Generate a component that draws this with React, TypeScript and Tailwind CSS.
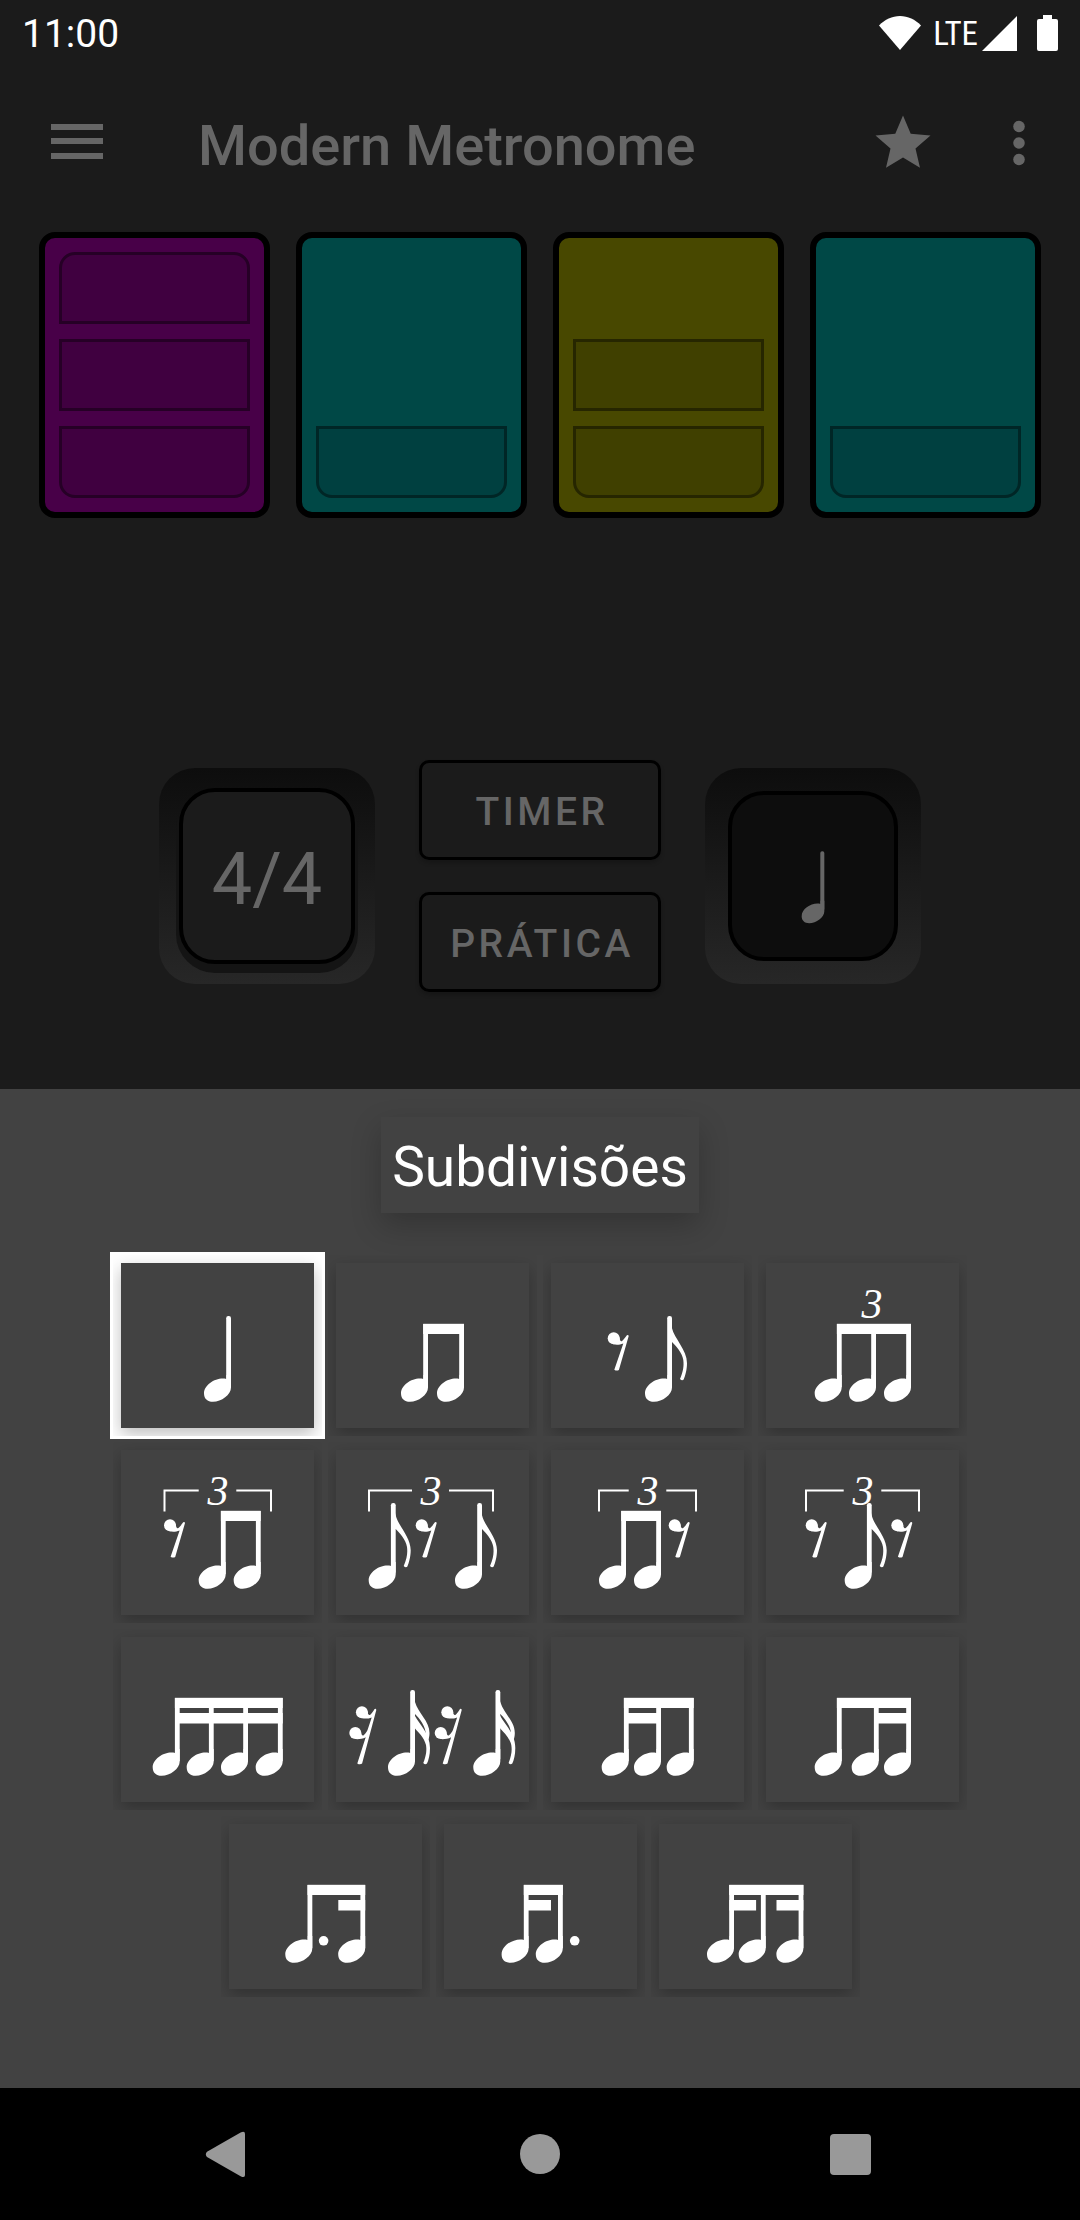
import React, { useState } from "react";

/* ---------- Music notation, drawn in a 193 x 165 cell ---------- */

const STEM = 4.8;

function Head({ x }: { x: number }) {
  return (
    <path
      transform={`translate(${x} 0)`}
      d="M-4.6 116C-6 115.5-7 115.4-8.2 115.4C-17 115.4-27 122.2-27 130.4C-27 135.6-23.6 138.7-18 138.7C-9.6 138.7 0 131.6 0 124.4L0 112L-4.6 112Z"
    />
  );
}

function Stem({ x, top }: { x: number; top: number }) {
  return <rect x={x - STEM} y={top} width={STEM} height={124 - top} rx={top < 60 ? 2.2 : 0} />;
}

function Quarter({ x }: { x: number }) {
  return (
    <g>
      <Head x={x} />
      <Stem x={x} top={53} />
    </g>
  );
}

function Eighth({ x }: { x: number }) {
  return (
    <g>
      <Quarter x={x} />
      <path
        transform={`translate(${x} 0)`}
        d="M-1 62L0 65.3C2 75 15 87 15 100.3C15 107 13.2 113 11.7 116.6Q10 118.2 8 116C11.4 108 12 103 11.3 97C10.2 89.5 3.5 82.5 0 79L-1 79Z"
      />
    </g>
  );
}

function Sixteenth({ x }: { x: number }) {
  return (
    <g>
      <Quarter x={x} />
      <path
        transform={`translate(${x} 0)`}
        d="M-1 62L0 65C3 76 14.5 84 14.5 96C14.5 99 14 101 13.3 102.8L10.6 98C11.6 90 4 81 0 77L-1 77Z"
      />
      <path
        transform={`translate(${x} 0)`}
        d="M-1 78L0 79C4 87 15 96 15 111C15 118 13.6 123 12 126.6Q10 128.2 8.3 126C11.4 118 11.8 113 11 108C9 100 3 95 0 91.5L-1 91Z"
      />
    </g>
  );
}

function Beamed({ xs, inner = [] }: { xs: number[]; inner?: [number, number][] }) {
  const left = xs[0] - STEM;
  return (
    <g>
      {xs.map((x) => (
        <g key={x}>
          <Head x={x} />
          <Stem x={x} top={61} />
        </g>
      ))}
      <rect x={left} y={60.8} width={xs[xs.length - 1] - left} height={10.2} />
      {inner.map(([a, b]) => (
        <rect key={a} x={a} y={76} width={b - a} height={10.5} />
      ))}
    </g>
  );
}

function EighthRest({ x }: { x: number }) {
  return (
    <g transform={`translate(${x} 69.3)`}>
      <circle cx="6" cy="6" r="6" />
      <path d="M11.6 4.5C12.2 8.6 13.2 9.4 14.4 8.6C16 7.4 17.8 5 19.2 3Q20.6 2 21 3.8L11.2 37.6Q9 39 6.6 37.4L15.6 11.2C12 12.7 8.4 12.8 5.5 12Z" />
    </g>
  );
}

function SixteenthRest({ x }: { x: number }) {
  return (
    <g transform={`translate(${x} 69)`}>
      <circle cx="12.6" cy="6.2" r="6" />
      <circle cx="6" cy="27" r="6" />
      <path d="M18 4.8C18.6 8.8 19.8 9.6 21 8.7C22.6 7.4 24.2 5 25.3 3Q26.8 2.2 27 4L12.8 57.6Q10.5 59.2 8 57.4L16.4 31.2C13 33 8.8 33.4 5.5 33L11.5 25.6C12.2 29.6 13.4 30.2 14.6 29C16.4 27.4 17.8 25.4 18.4 23.6L22.4 11.4C19 12.8 15.4 12.9 12.3 12.1Z" />
    </g>
  );
}

function Three({ x }: { x: number }) {
  return (
    <text x={x} y={55} textAnchor="middle" className="font-['Liberation_Serif',serif] text-[42px] italic">
      3
    </text>
  );
}

function Bracket({ x1, x2, x3, x4 }: { x1: number; x2: number; x3: number; x4: number }) {
  return (
    <path
      d={`M${x1 + 1} 61.5V40.5H${x2}M${x3} 40.5H${x4 - 1}V61.5`}
      fill="none"
      stroke="currentColor"
      strokeWidth="2"
    />
  );
}

type Pattern = { name: string; art: React.ReactNode };

const patterns: Pattern[] = [
  { name: "Semínima", art: <Quarter x={110} /> },
  { name: "Duas colcheias", art: <Beamed xs={[92, 128]} /> },
  {
    name: "Pausa e colcheia",
    art: (
      <>
        <EighthRest x={56.7} />
        <Eighth x={121} />
      </>
    ),
  },
  {
    name: "Tercina",
    art: (
      <>
        <Three x={106} />
        <Beamed xs={[75.7, 110, 145]} />
      </>
    ),
  },
  {
    name: "Tercina, pausa no início",
    art: (
      <>
        <Bracket x1={42.5} x2={77.7} x3={115.3} x4={151} />
        <Three x={97} />
        <EighthRest x={43} />
        <Beamed xs={[104.7, 139.7]} />
      </>
    ),
  },
  {
    name: "Tercina, pausa no meio",
    art: (
      <>
        <Bracket x1={32} x2={76} x3={113} x4={158} />
        <Three x={95} />
        <Eighth x={59.7} />
        <EighthRest x={79.7} />
        <Eighth x={146} />
      </>
    ),
  },
  {
    name: "Tercina, pausa no fim",
    art: (
      <>
        <Bracket x1={47} x2={77.7} x3={115.3} x4={146} />
        <Three x={97} />
        <Beamed xs={[75, 110]} />
        <EighthRest x={117.7} />
      </>
    ),
  },
  {
    name: "Tercina, nota no meio",
    art: (
      <>
        <Bracket x1={39} x2={77.7} x3={115.3} x4={154} />
        <Three x={97} />
        <EighthRest x={39.7} />
        <Eighth x={105.7} />
        <EighthRest x={125.3} />
      </>
    ),
  },
  { name: "Quatro semicolcheias", art: <Beamed xs={[58.7, 92.7, 127, 161.7]} inner={[[54, 161.7]]} /> },
  {
    name: "Pausas e semicolcheias",
    art: (
      <>
        <SixteenthRest x={13.3} />
        <Sixteenth x={79} />
        <SixteenthRest x={98.7} />
        <Sixteenth x={164.3} />
      </>
    ),
  },
  { name: "Duas semicolcheias e colcheia", art: <Beamed xs={[77.7, 110, 142.7]} inner={[[73, 110]]} /> },
  { name: "Colcheia e duas semicolcheias", art: <Beamed xs={[75.7, 112.7, 145]} inner={[[108, 145]]} /> },
  {
    name: "Colcheia pontuada e semicolcheia",
    art: (
      <>
        <Beamed xs={[83.3, 136.2]} inner={[[109.3, 136.2]]} />
        <circle cx="94.6" cy="116.8" r="4.8" />
      </>
    ),
  },
  {
    name: "Semicolcheia e colcheia pontuada",
    art: (
      <>
        <Beamed xs={[84.6, 118.8]} inner={[[80, 107]]} />
        <circle cx="130.7" cy="116.8" r="4.8" />
      </>
    ),
  },
  {
    name: "Semicolcheia, colcheia, semicolcheia",
    art: <Beamed xs={[75, 106.7, 144.4]} inner={[[70.3, 97.1], [117.5, 144.4]]} />,
  },
];

/* ---------- Beat cards ---------- */

const tones = {
  magenta: { card: "bg-[#480048]", bar: "bg-[#400040] border-[#260026]" },
  teal: { card: "bg-[#004846]", bar: "bg-[#004040] border-[#002626]" },
  olive: { card: "bg-[#484800]", bar: "bg-[#404000] border-[#262600]" },
};

const beats: { tone: keyof typeof tones; level: number }[] = [
  { tone: "magenta", level: 3 },
  { tone: "teal", level: 1 },
  { tone: "olive", level: 2 },
  { tone: "teal", level: 1 },
];

function Beat({ tone, level, index }: { tone: keyof typeof tones; level: number; index: number }) {
  const bars = Array.from({ length: level }, (_, i) => level - i);
  return (
    <button
      aria-label={`Tempo ${index}`}
      className={`flex h-[286px] flex-col justify-end gap-[15px] rounded-2xl border-6 border-black p-[14px] ${tones[tone].card}`}
    >
      {bars.map((n) => (
        <span
          key={n}
          className={`block h-[72px] w-full border-3 ${tones[tone].bar} ${n === 3 ? "rounded-t-2xl" : ""} ${n === 1 ? "rounded-b-2xl" : ""}`}
        />
      ))}
    </button>
  );
}

/* ---------- Page parts ---------- */

function StatusBar() {
  return (
    <div className="flex h-[66px] items-center justify-between pr-[22px] pl-[22px] text-white">
      <span className="pt-0.5 text-[39px] leading-none">11:00</span>
      <div className="flex items-center">
        <svg viewBox="0 0 42 34" className="h-[34px] w-[42px]" fill="currentColor" aria-hidden="true">
          <path d="M21 34L0 9.5C6 3.5 13 0 21 0S36 3.5 42 9.5Z" />
        </svg>
        <span className="ml-3 font-['Roboto_Condensed','Liberation_Sans_Narrow',Roboto,sans-serif] text-[33px] leading-none">
          LTE
        </span>
        <svg viewBox="0 0 35 35" className="ml-1 h-[35px] w-[35px]" fill="currentColor" aria-hidden="true">
          <path d="M35 0V35H0Z" />
        </svg>
        <svg viewBox="0 0 21 36" className="ml-5 h-9 w-[21px]" fill="currentColor" aria-hidden="true">
          <path d="M6 0H15V4H19Q21 4 21 6V34Q21 36 19 36H2Q0 36 0 34V6Q0 4 2 4H6Z" />
        </svg>
      </div>
    </div>
  );
}

function Header() {
  return (
    <header className="flex h-[154px] items-center pr-7 pl-11 text-[#666]">
      <button aria-label="Menu" className="size-[66px]">
        <svg viewBox="0 0 66 66" fill="currentColor">
          <path d="M7 14H59V20H7ZM7 28H59V34H7ZM7 43H59V49H7Z" />
        </svg>
      </button>
      <h1 className="ml-[88px] flex-1 pt-1.5 text-[56px] leading-none font-medium">Modern Metronome</h1>
      <button aria-label="Favoritos" className="size-[66px]">
        <svg viewBox="0 0 24 24" fill="currentColor">
          <path d="M12 17.27L18.18 21l-1.64-7.03L22 9.24l-7.19-.61L12 2 9.19 8.63 2 9.24l5.46 4.73L5.82 21z" />
        </svg>
      </button>
      <button aria-label="Mais opções" className="ml-[50px] size-[66px]">
        <svg viewBox="0 0 24 24" fill="currentColor">
          <circle cx="12" cy="6" r="2.1" />
          <circle cx="12" cy="12" r="2.1" />
          <circle cx="12" cy="18" r="2.1" />
        </svg>
      </button>
    </header>
  );
}

const outlined =
  "h-[100px] w-[242px] rounded-[10px] border-3 border-black pt-1 pl-1 text-[39px] leading-none font-medium tracking-[0.09em] shadow-[0_3px_4px_rgba(0,0,0,0.2)]";
const well =
  "flex size-[216px] items-center justify-center rounded-[36px] bg-linear-to-b from-[#0d0d0d] via-[#1a1a1a] to-[#272727]";

function Controls() {
  return (
    <div className="mt-auto flex items-center justify-center gap-11 pb-[97px] text-[#666]">
      <div className={well}>
        <button className="size-[176px] rounded-[36px] border-4 border-black bg-[#1b1b1b] pt-2 text-[72px] leading-none shadow-[0_6px_0_3px_#141414]">
          4/4
        </button>
      </div>
      <div className="flex flex-col gap-8">
        <button className={outlined}>TIMER</button>
        <button className={outlined}>PRÁTICA</button>
      </div>
      <div className={well}>
        <button
          aria-label="Subdivisão atual"
          className="flex size-[170px] items-center justify-center rounded-[36px] border-4 border-black bg-[#0d0d0d]"
        >
          <svg viewBox="0 0 193 165" className="h-36 w-42" fill="currentColor" aria-hidden="true">
            <Quarter x={110} />
          </svg>
        </button>
      </div>
    </div>
  );
}

function Sheet() {
  const [selected, setSelected] = useState(0);
  return (
    <section aria-labelledby="sheet-title" className="bg-[#424242] pt-7 pb-[88px] text-white">
      <h2
        id="sheet-title"
        className="mx-auto flex h-24 w-fit items-center bg-[#424242] px-[11px] pt-1 text-[55px] leading-none shadow-[0_12px_28px_rgba(0,0,0,0.22)]"
      >
        Subdivisões
      </h2>
      <div className="mx-auto mt-[39px] flex max-w-[860px] flex-wrap justify-center">
        {patterns.map((p, i) => (
          <div key={p.name} className={`p-[3px] ${i === selected ? "bg-white" : ""}`}>
            <div className="overflow-hidden p-2">
              <button
                aria-label={p.name}
                aria-pressed={i === selected}
                onClick={() => setSelected(i)}
                className="block h-[165px] w-[193px] bg-[#424242] shadow-[0_6px_16px_rgba(0,0,0,0.26)]"
              >
                <svg viewBox="0 0 193 165" fill="currentColor" aria-hidden="true">
                  {p.art}
                </svg>
              </button>
            </div>
          </div>
        ))}
      </div>
    </section>
  );
}

function NavBar() {
  return (
    <nav className="grid h-[132px] grid-cols-3 items-center justify-items-center bg-black px-[75px] text-[#999]">
      <button aria-label="Voltar" className="size-[66px]">
        <svg viewBox="0 0 66 66" fill="currentColor">
          <path d="M10 30.8L43.6 11.6Q48 9.6 48 13V54Q48 57.4 43.6 55.2L10 36Q7.6 33.4 10 30.8Z" />
        </svg>
      </button>
      <button aria-label="Início" className="size-[66px]">
        <svg viewBox="0 0 66 66" fill="currentColor">
          <circle cx="33" cy="33" r="20" />
        </svg>
      </button>
      <button aria-label="Recentes" className="size-[66px]">
        <svg viewBox="0 0 66 66" fill="currentColor">
          <rect x="13" y="13" width="41" height="41" rx="4" />
        </svg>
      </button>
    </nav>
  );
}

export default function App() {
  return (
    <div className="flex min-h-screen flex-col bg-[#1b1b1b] font-[Roboto,sans-serif]">
      <StatusBar />
      <Header />
      <main className="flex flex-1 flex-col">
        <div className="mt-3 grid grid-cols-4 gap-[26px] px-[39px]">
          {beats.map((b, i) => (
            <Beat key={i} index={i + 1} {...b} />
          ))}
        </div>
        <Controls />
      </main>
      <Sheet />
      <NavBar />
    </div>
  );
}
